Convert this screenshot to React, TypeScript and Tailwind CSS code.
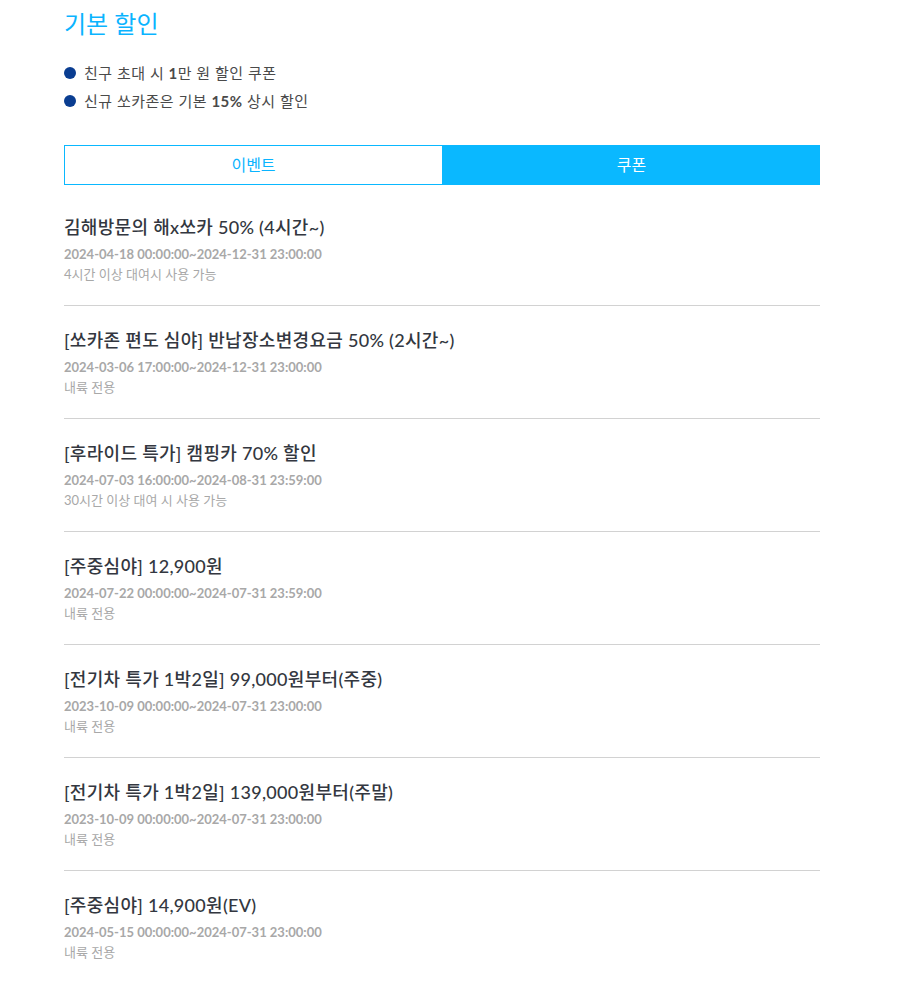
import React from "react";

const items = [
  { t: "김해방문의 해x쏘카 50% (4시간~)", d: "2024-04-18 00:00:00~2024-12-31 23:00:00", n: "4시간 이상 대여시 사용 가능" },
  { t: "[쏘카존 편도 심야] 반납장소변경요금 50% (2시간~)", d: "2024-03-06 17:00:00~2024-12-31 23:00:00", n: "내륙 전용" },
  { t: "[후라이드 특가] 캠핑카 70% 할인", d: "2024-07-03 16:00:00~2024-08-31 23:59:00", n: "30시간 이상 대여 시 사용 가능" },
  { t: "[주중심야] 12,900원", d: "2024-07-22 00:00:00~2024-07-31 23:59:00", n: "내륙 전용" },
  { t: "[전기차 특가 1박2일] 99,000원부터(주중)", d: "2023-10-09 00:00:00~2024-07-31 23:00:00", n: "내륙 전용" },
  { t: "[전기차 특가 1박2일] 139,000원부터(주말)", d: "2023-10-09 00:00:00~2024-07-31 23:00:00", n: "내륙 전용" },
  { t: "[주중심야] 14,900원(EV)", d: "2024-05-15 00:00:00~2024-07-31 23:00:00", n: "내륙 전용" },
];

export default function App() {
  return (
    <div
      className="w-[913px] min-h-[982px] bg-white"
      style={{ fontFamily: '"Lato", "Noto Sans CJK KR", sans-serif' }}
    >
      <div className="ml-[64px] w-[756px] pt-[6px]">
        <h1 className="text-[24px] leading-[36px] text-[#0ab4ff] font-normal">기본 할인</h1>
        <ul className="mt-[21px] flex flex-col gap-[8px]">
          <li className="flex items-center gap-[8px] text-[15px] leading-[20px] text-[#4a4a4a] tracking-[0.5px]">
            <span className="w-[12px] h-[12px] rounded-full bg-[#0a3d91] shrink-0" />
            <span>친구 초대 시 <b className="font-bold">1</b>만 원 할인 쿠폰</span>
          </li>
          <li className="flex items-center gap-[8px] text-[15px] leading-[20px] text-[#4a4a4a] tracking-[0.5px]">
            <span className="w-[12px] h-[12px] rounded-full bg-[#0a3d91] shrink-0" />
            <span>신규 쏘카존은 기본 <b className="font-bold">15%</b> 상시 할인</span>
          </li>
        </ul>
        <div className="mt-[34px] flex h-[40px]">
          <button className="flex-1 border border-[#0ab8ff] bg-white text-[#0ab4ff] text-[16px] font-normal">이벤트</button>
          <button className="flex-1 bg-[#0ab8ff] text-white text-[16px] font-normal">쿠폰</button>
        </div>
        <div className="mt-[8px]">
          {items.map((it, i) => (
            <div
              key={i}
              className={`pt-[22px] pb-[21px] ${i < items.length - 1 ? "border-b border-[#d2d2d2]" : ""}`}
            >
              <div className="text-[18px] leading-[24px] text-[#333740] font-medium tracking-[0.3px]">{it.t}</div>
              <div className="mt-[5px] text-[13px] leading-[20px] text-[#a8a8a8] font-bold">{it.d}</div>
              <div className="text-[13px] leading-[20px] text-[#a8a8a8]">{it.n}</div>
            </div>
          ))}
        </div>
      </div>
    </div>
  );
}
